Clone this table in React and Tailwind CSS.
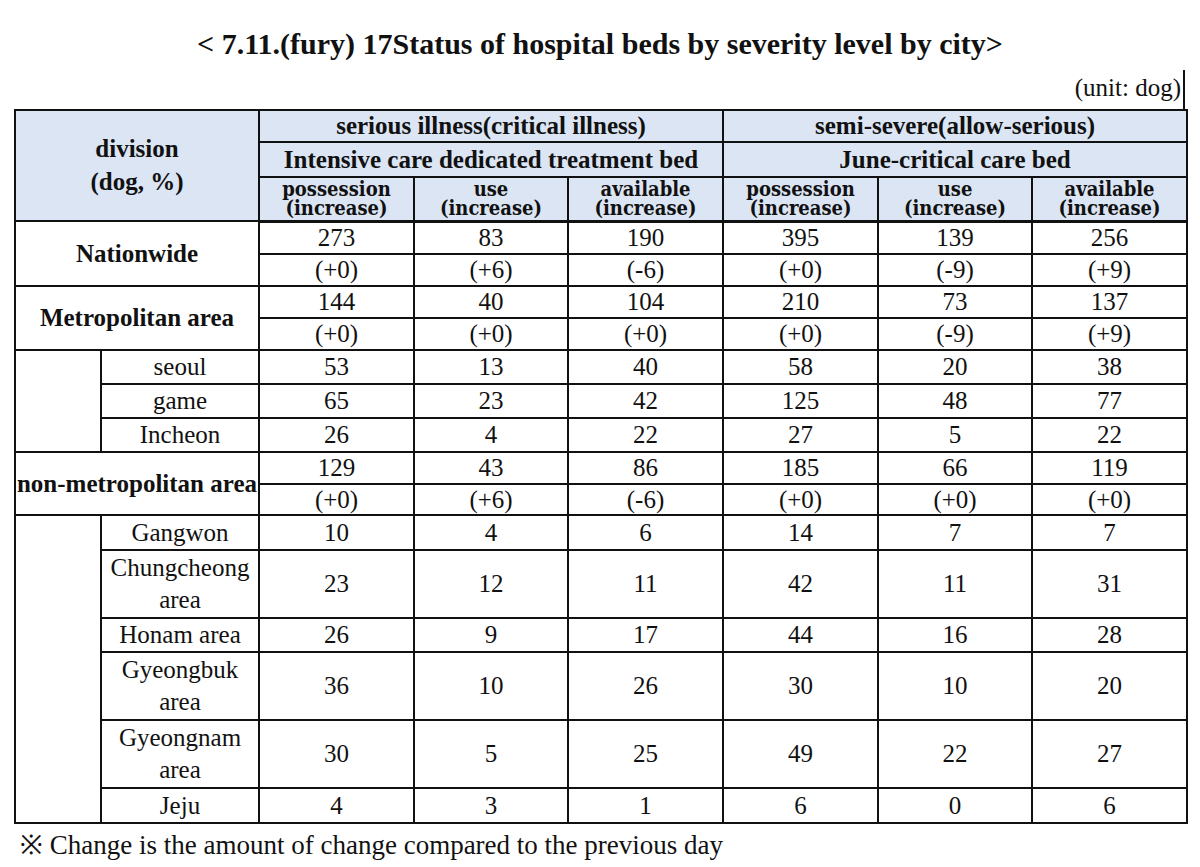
const rows = [
  { name: 'Nationwide', h: ['h-[33px]', 'h-[32px]'], a: ['273', '83', '190', '395', '139', '256'], b: ['(+0)', '(+6)', '(-6)', '(+0)', '(-9)', '(+9)'] },
  { name: 'Metropolitan area', h: ['h-[32px]', 'h-[32px]'], a: ['144', '40', '104', '210', '73', '137'], b: ['(+0)', '(+0)', '(+0)', '(+0)', '(-9)', '(+9)'] },
  { name: 'non-metropolitan area', h: ['h-[32px]', 'h-[31px]'], a: ['129', '43', '86', '185', '66', '119'], b: ['(+0)', '(+6)', '(-6)', '(+0)', '(+0)', '(+0)'] },
];

const metro = [
  { name: ['seoul'], h: 'h-[33px]', v: ['53', '13', '40', '58', '20', '38'] },
  { name: ['game'], h: 'h-[33px]', v: ['65', '23', '42', '125', '48', '77'] },
  { name: ['Incheon'], h: 'h-[33px]', v: ['26', '4', '22', '27', '5', '22'] },
];

const nonMetro = [
  { name: ['Gangwon'], h: 'h-[35px]', v: ['10', '4', '6', '14', '7', '7'] },
  { name: ['Chungcheong', 'area'], h: 'h-[68px]', v: ['23', '12', '11', '42', '11', '31'] },
  { name: ['Honam area'], h: 'h-[34px]', v: ['26', '9', '17', '44', '16', '28'] },
  { name: ['Gyeongbuk', 'area'], h: 'h-[68px]', v: ['36', '10', '26', '30', '10', '20'] },
  { name: ['Gyeongnam', 'area'], h: 'h-[68px]', v: ['30', '5', '25', '49', '22', '27'] },
  { name: ['Jeju'], h: 'h-[35px]', v: ['4', '3', '1', '6', '0', '6'] },
];

const cell = 'border-2 border-[#111] p-0 text-center align-middle';
const head = 'border-2 border-[#111] p-0 text-center align-middle bg-[#dbe5f4] font-bold';
const sub = "font-['DejaVu_Serif_Condensed','DejaVu_Serif',serif] [font-stretch:condensed] text-[20px] leading-[19px] font-bold";

function TotalRows({ r }) {
  return (
    <>
      <tr className={r.h[0]}>
        <td colSpan={2} rowSpan={2} className={cell + ' font-bold text-[25px] whitespace-nowrap'}>{r.name}</td>
        {r.a.map((x, i) => (
          <td key={i} className={cell}>{x}</td>
        ))}
      </tr>
      <tr className={r.h[1]}>
        {r.b.map((x, i) => (
          <td key={i} className={cell}>{x}</td>
        ))}
      </tr>
    </>
  );
}

function CityRows({ list }) {
  return list.map((c, idx) => (
    <tr key={c.name[0]} className={c.h}>
      {idx === 0 && <td rowSpan={list.length} className={cell}></td>}
      <td className={cell + ' leading-[32px]'}>
        {c.name.map((n) => (
          <div key={n}>{n}</div>
        ))}
      </td>
      {c.v.map((x, i) => (
        <td key={i} className={cell}>{x}</td>
      ))}
    </tr>
  ));
}

export default function App() {
  return (
    <div className="bg-white w-[1200px] h-[867px] font-['Liberation_Serif',serif] text-[#111]">
      <div className="pt-[26px] h-[70px] text-center font-bold text-[30px] leading-[36px]">
        &lt; 7.11.(fury) 17Status of hospital beds by severity level by city&gt;
      </div>
      <div className="flex justify-end pr-[15px]">
        <div className="border-r-2 border-[#111] h-[39px] pt-[3px] pr-[2px] text-[25px] leading-[30px]">(unit: dog)</div>
      </div>
      <table className="ml-[14px] w-[1172px] table-fixed border-collapse text-[25px] leading-[28px]">
        <colgroup>
          <col className="w-[86px]" />
          <col className="w-[158px]" />
          <col className="w-[155px]" />
          <col className="w-[154px]" />
          <col className="w-[155px]" />
          <col className="w-[155px]" />
          <col className="w-[154px]" />
          <col className="w-[155px]" />
        </colgroup>
        <thead>
          <tr className="h-[32px]">
            <th colSpan={2} rowSpan={3} className={head + ' leading-[33px]'}>
              <div className="-mt-[1px]">division</div>
              <div>(dog, %)</div>
            </th>
            <th colSpan={3} className={head}>serious illness(critical illness)</th>
            <th colSpan={3} className={head}>semi-severe(allow-serious)</th>
          </tr>
          <tr className="h-[35px]">
            <th colSpan={3} className={head}>Intensive care dedicated treatment bed</th>
            <th colSpan={3} className={head}>June-critical care bed</th>
          </tr>
          <tr className="h-[44px]">
            {['possession', 'use', 'available', 'possession', 'use', 'available'].map((h, i) => (
              <th key={i} className={head + ' border-b-[3px]'}>
                <div className={sub}>{h}</div>
                <div className={sub}>(increase)</div>
              </th>
            ))}
          </tr>
        </thead>
        <tbody>
          <TotalRows r={rows[0]} />
          <TotalRows r={rows[1]} />
          <CityRows list={metro} />
          <TotalRows r={rows[2]} />
          <CityRows list={nonMetro} />
        </tbody>
      </table>
      <div className="pl-[20px] pt-[4px] text-[27px] leading-[34px]">※ Change is the amount of change compared to the previous day</div>
    </div>
  );
}
